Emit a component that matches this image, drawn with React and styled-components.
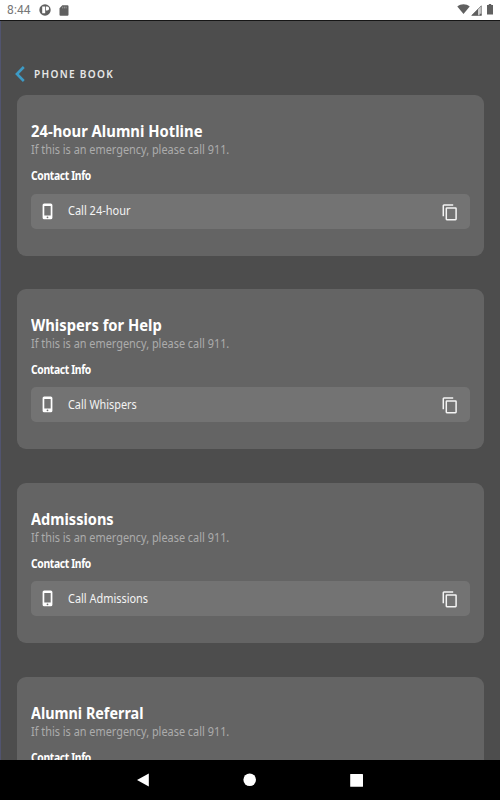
import React from "react";
import styled, { createGlobalStyle } from "styled-components";

const contacts = [
  { title: "24-hour Alumni Hotline", call: "Call 24-hour", narrow: 0.925, callNarrow: 0.915 },
  { title: "Whispers for Help", call: "Call Whispers", narrow: 0.922, callNarrow: 0.905 },
  { title: "Admissions", call: "Call Admissions", narrow: 0.91, callNarrow: 0.91 },
  { title: "Alumni Referral", call: "Call Alumni", narrow: 0.897, callNarrow: 0.91 },
];

const ContactCard = ({ contact }) => {
  return (
    <Card>
      <Title $narrow={contact.narrow}>{contact.title}</Title>
      <Notice>If this is an emergency, please call 911.</Notice>
      <InfoLabel>Contact Info</InfoLabel>
      <CallRow>
        <PhoneIcon viewBox="0 0 11 17">
          <path
            fillRule="evenodd"
            d="M2.2 0.5h6.6a1.6 1.6 0 0 1 1.6 1.6v12.6a1.6 1.6 0 0 1-1.6 1.6H2.2A1.6 1.6 0 0 1 .6 14.7V2.1A1.6 1.6 0 0 1 2.2.5zM2.3 3v9.6h6.4V3zM5.5 13.4a.9.9 0 1 0 0 1.8.9.9 0 0 0 0-1.8z"
          />
        </PhoneIcon>
        <CallText $narrow={contact.callNarrow}>{contact.call}</CallText>
        <CopyIcon viewBox="0 0 16 17">
          <rect x="4.3" y="4" width="9.8" height="11.7" rx="0.6" />
          <path d="M1.3 12.2V1.7Q1.3 1 2 1h9.2" />
        </CopyIcon>
      </CallRow>
    </Card>
  );
};

const App = () => {
  return (
    <Screen>
      <GlobalStyle />
      <StatusBar>
        <Clock>8:44</Clock>
        <StatusIcon $w={12} viewBox="0 0 12 12">
          <circle cx="6" cy="6" r="5.7" />
          <path fill="#fff" d="M3.2 2.6h3v6.6h-3zM7 2.6h1.2a1.9 1.9 0 0 1 0 3.8H7z" />
        </StatusIcon>
        <StatusIcon $w={10} $h={11} $left={7.5} viewBox="0 0 10 11">
          <path d="M3.3 0.3h5.2a1 1 0 0 1 1 1v8.4a1 1 0 0 1-1 1h-7a1 1 0 0 1-1-1V3.2z" />
          <path stroke="#aaa" strokeWidth="0.8" d="M3.7 1.6v1.8M5.4 1.6v1.8M7.1 1.6v1.8" />
        </StatusIcon>
        <Spacer />
        <StatusIcon $w={13} $h={10} $up={1} viewBox="0 0 13 10">
          <path d="M6.5 10L.3 2.4C3.9-.5 9.1-.5 12.7 2.4z" />
        </StatusIcon>
        <StatusIcon $w={11} $h={11} $left={0.5} viewBox="0 0 11 11">
          <path opacity="0.3" d="M10.5.5v10H.5z" />
          <path d="M7 4v6.5H.5zM8.7 8.8h1.8v1.7H8.7z" />
          <path stroke="#666" strokeWidth="0.7" fill="none" d="M10.3.8v9.6H.8z" />
        </StatusIcon>
        <StatusIcon $w={6} $h={11} $left={5.5} $up={1} viewBox="0 0 6 11">
          <path d="M1.8 0h2.4v1H6v9.6H0V1h1.8z" />
        </StatusIcon>
      </StatusBar>
      <Content>
        <Header>
          <BackIcon viewBox="0 0 10 16">
            <path d="M8.8 1L1.9 8l6.9 7" />
          </BackIcon>
          <HeaderText>PHONE BOOK</HeaderText>
        </Header>
        <CardList>
          {contacts.map((contact) => (
            <ContactCard key={contact.title} contact={contact} />
          ))}
        </CardList>
      </Content>
      <NavBar>
        <NavIcon viewBox="0 0 14 14">
          <path d="M12.8.4v13.2L1 7z" />
        </NavIcon>
        <NavIcon viewBox="0 0 14 14">
          <circle cx="6.7" cy="6.7" r="6.3" />
        </NavIcon>
        <NavIcon viewBox="0 0 14 14">
          <rect x="0.2" y="1" width="12.8" height="12.7" rx="0.5" />
        </NavIcon>
      </NavBar>
    </Screen>
  );
};
export default App;

const GlobalStyle = createGlobalStyle`
  * {
    box-sizing: border-box;
  }

  body {
    margin: 0;
    overflow: hidden;
    font-family: "Noto Sans", "Open Sans", sans-serif;
  }

  h1, h2, p {
    margin: 0;
    white-space: nowrap;
  }
`;

const Screen = styled.div`
  width: 500px;
  height: 800px;
  display: flex;
  flex-direction: column;
  background-color: #4d4d4d;
`;

// status bar
const StatusBar = styled.div`
  height: 21px;
  flex-shrink: 0;
  display: flex;
  align-items: center;
  padding: 0 7px;
  background-color: #fff;
  border-bottom: 1px solid #161616;
`;

const Clock = styled.p`
  width: 32px;
  font-family: Roboto, sans-serif;
  font-size: 12px;
  line-height: 20px;
  letter-spacing: 0.15px;
  color: #777;
`;

const StatusIcon = styled.svg`
  width: ${(props) => props.$w}px;
  height: ${(props) => props.$h || props.$w}px;
  margin-left: ${(props) => props.$left || 0}px;
  margin-bottom: ${(props) => (props.$up || 0) * 2}px;
  flex-shrink: 0;
  fill: #606060;
`;

const Spacer = styled.div`
  flex: 1;
`;

// page
const Content = styled.div`
  flex: 1;
  min-height: 0;
  overflow: hidden;
  padding: 43px 16px 0 16px;
  border-left: 1px solid #51546f;
`;

const Header = styled.div`
  height: 21px;
  display: flex;
  align-items: center;
`;

const BackIcon = styled.svg`
  width: 10px;
  height: 16px;
  margin-left: -2px;
  margin-bottom: 1px;
  fill: none;
  stroke: #3d9bc6;
  stroke-width: 2.6;
`;

const HeaderText = styled.h1`
  margin-left: 9px;
  margin-bottom: 1px;
  font-size: 10.5px;
  line-height: 20px;
  font-weight: 600;
  letter-spacing: 1.35px;
  color: #e6e6e6;
  transform: scaleX(0.96);
  transform-origin: left center;
`;

const CardList = styled.div`
  display: flex;
  flex-direction: column;
  gap: 33.4px;
  margin-top: 10px;
`;

const Card = styled.div`
  height: 160.5px;
  flex-shrink: 0;
  padding: 25px 14px 0;
  border-radius: 9px;
  background-color: #646464;
`;

// the text is slightly condensed
const Title = styled.h2`
  font-size: 16px;
  line-height: 22px;
  font-weight: 700;
  color: #fff;
  transform: scaleX(${(props) => props.$narrow});
  transform-origin: left center;
`;

const Notice = styled.p`
  font-size: 12px;
  line-height: 16px;
  color: #acacac;
  transform: scaleX(0.908);
  transform-origin: left center;
`;

const InfoLabel = styled.p`
  margin-top: 10px;
  font-size: 12px;
  line-height: 16px;
  font-weight: 700;
  letter-spacing: -0.4px;
  color: #fff;
  transform: scaleX(0.86);
  transform-origin: left center;
`;

const CallRow = styled.div`
  height: 35px;
  display: flex;
  align-items: center;
  margin-top: 9.5px;
  padding: 0 12px 0 11px;
  border-radius: 5px;
  background-color: #737373;
`;

const PhoneIcon = styled.svg`
  width: 11px;
  height: 17px;
  fill: #fff;
`;

const CallText = styled.p`
  flex: 1;
  margin-left: 15px;
  font-size: 12px;
  line-height: 16px;
  color: #f4f4f4;
  transform: scaleX(${(props) => props.$narrow});
  transform-origin: left center;
`;

const CopyIcon = styled.svg`
  width: 16px;
  height: 17px;
  margin-top: 2px;
  fill: none;
  stroke: #f4f4f4;
  stroke-width: 1.5;
`;

// navigation bar
const NavBar = styled.div`
  height: 40px;
  flex-shrink: 0;
  display: flex;
  align-items: center;
  justify-content: center;
  gap: 93px;
  background-color: #000;
`;

const NavIcon = styled.svg`
  width: 14px;
  height: 14px;
  fill: #fff;
`;
